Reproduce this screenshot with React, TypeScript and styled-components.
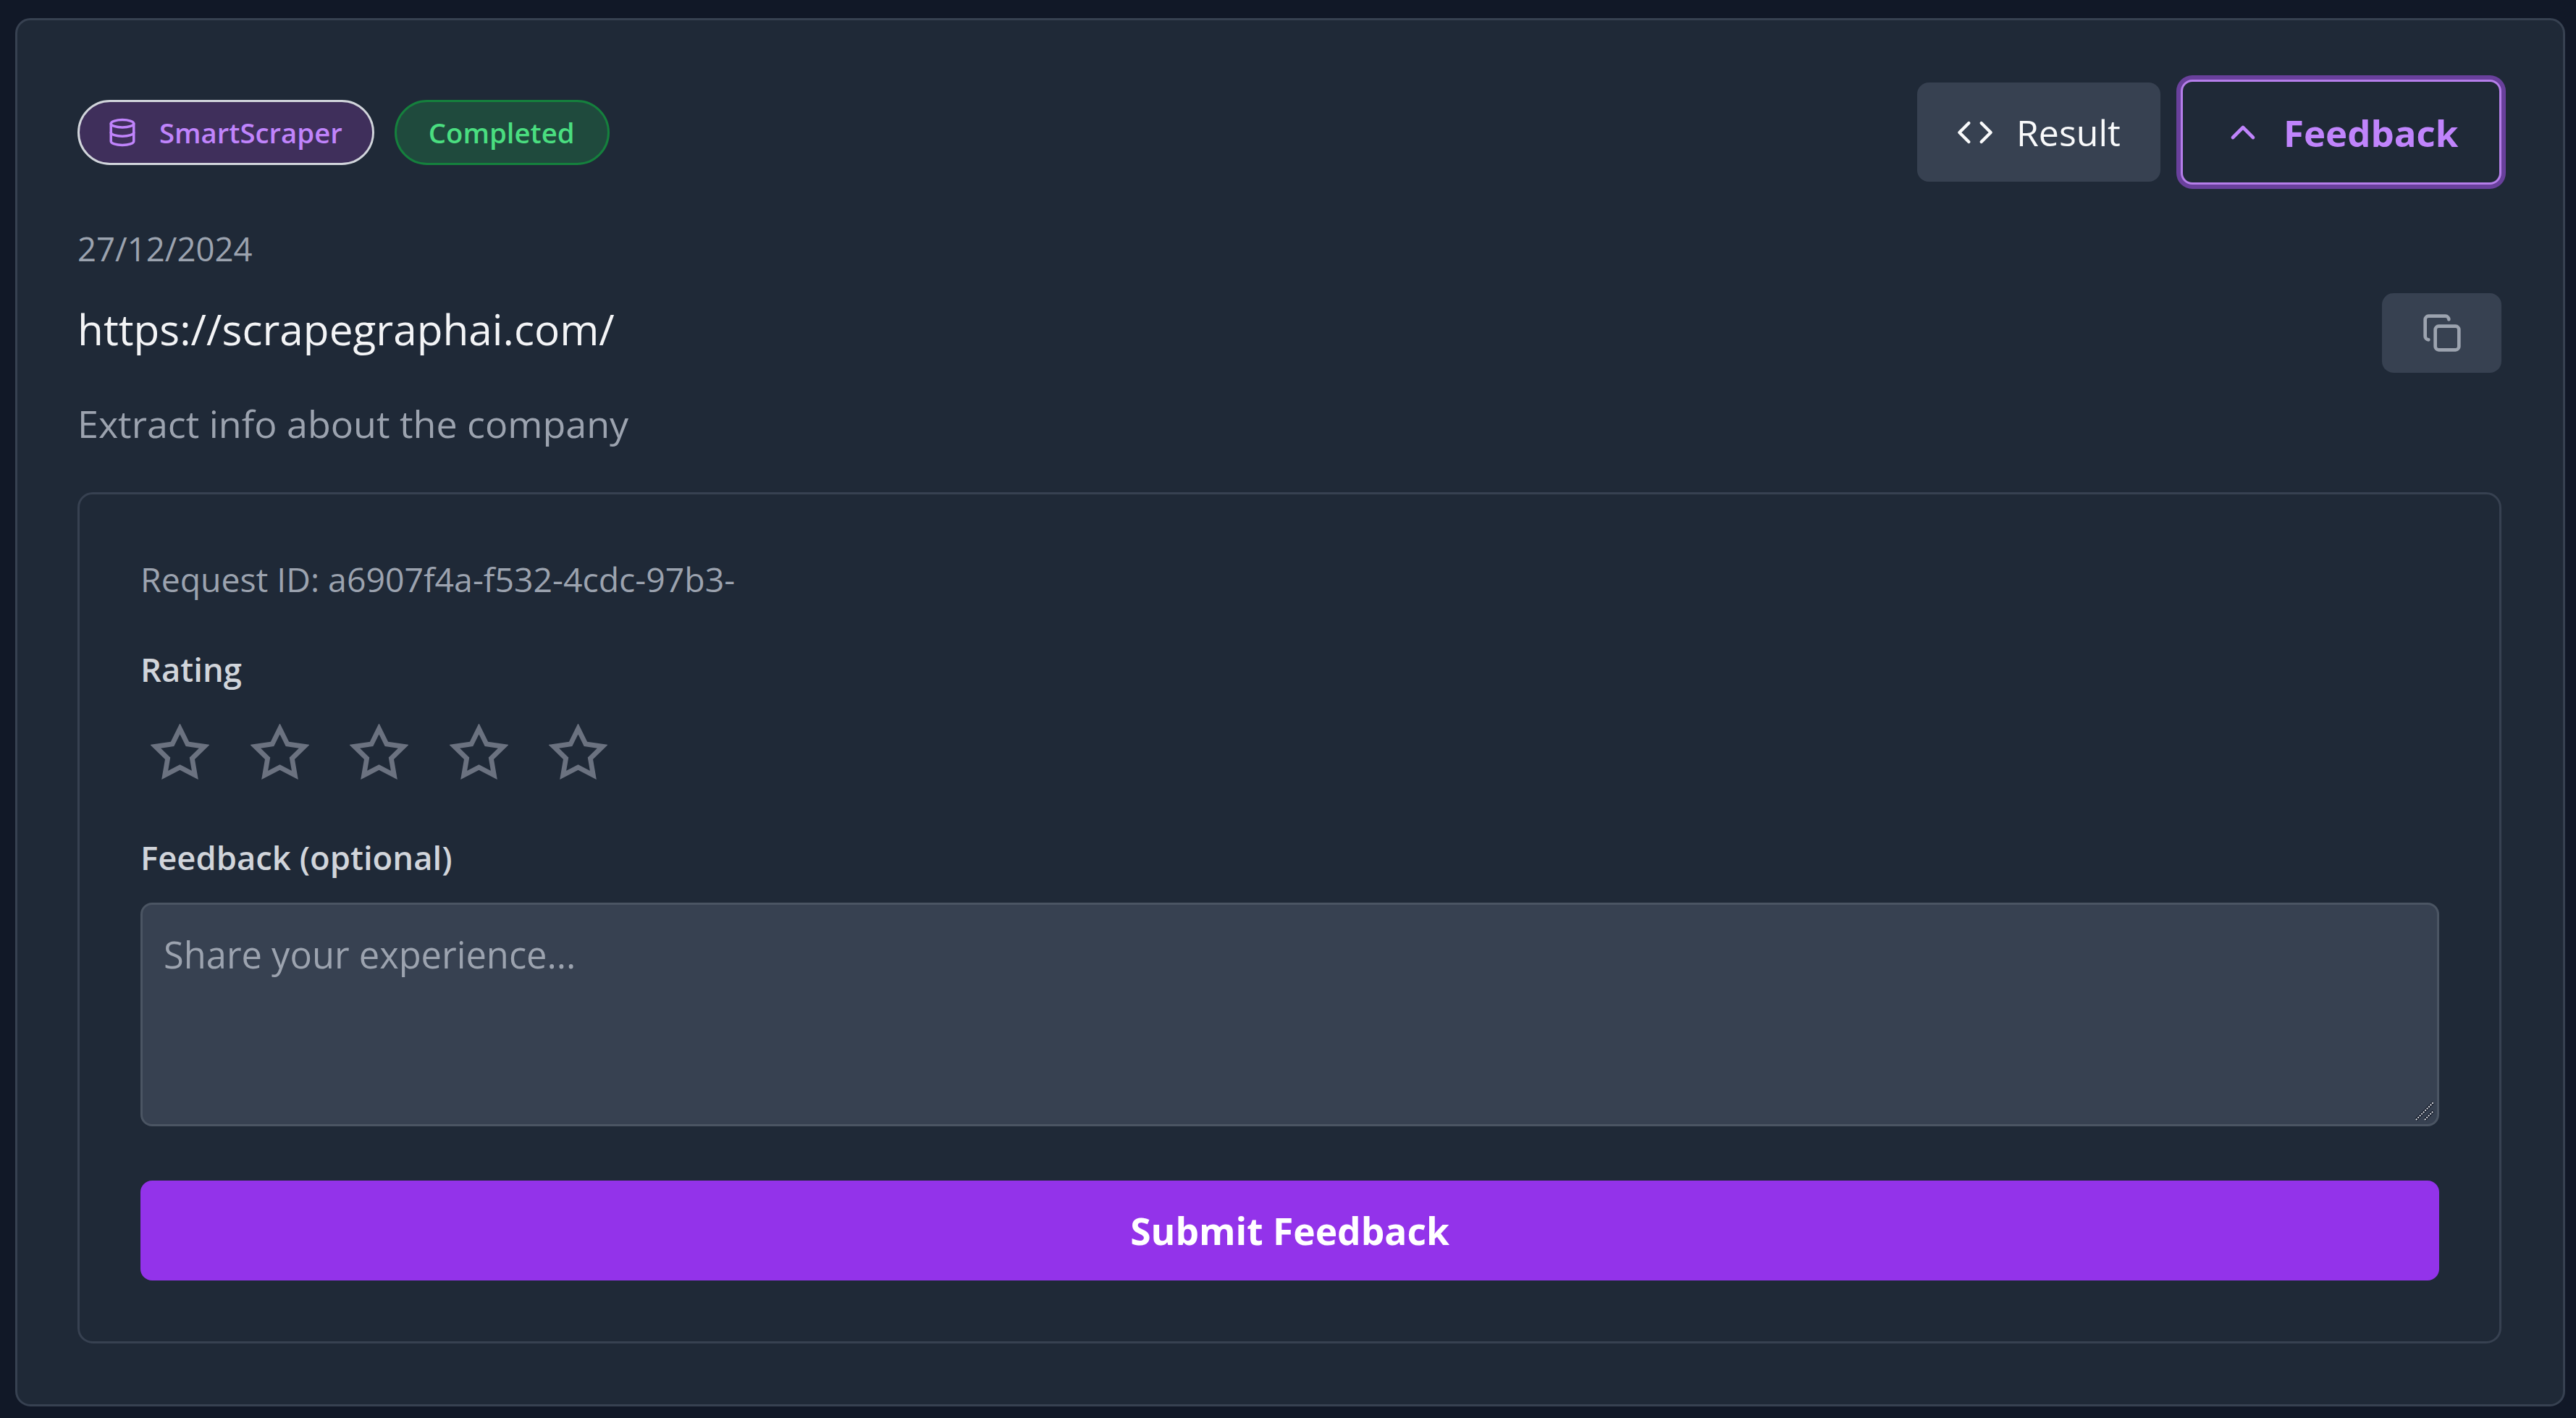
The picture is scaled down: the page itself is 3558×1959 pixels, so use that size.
import React from "react";
import styled, { createGlobalStyle } from "styled-components";
import { Database, Code, ChevronUp, Copy } from "lucide-react";

const Global = createGlobalStyle`
  html, body { margin: 0; padding: 0; background: #111827; }
  * { box-sizing: border-box; }
  body { font-family: "Open Sans", "Noto Sans", "Liberation Sans", sans-serif; }
`;

const Page = styled.div`
  width: 3558px;
  height: 1959px;
  padding: 25px 15px 16px 21px;
  background: #111827;
  overflow: hidden;
`;

const Card = styled.section`
  height: 100%;
  padding: 86px 85px 84px 83px;
  background: #1f2937;
  border: 3px solid #374151;
  border-radius: 21px;
`;

const Header = styled.header`
  display: flex;
  align-items: center;
  justify-content: space-between;
  height: 137px;
`;

const Group = styled.div<{ $gap: number }>`
  display: flex;
  align-items: center;
  gap: ${(p) => p.$gap}px;
`;

const Pill = styled.span<{ $tone: "purple" | "green" }>`
  display: inline-flex;
  align-items: center;
  gap: 30px;
  height: 90px;
  padding: ${(p) => (p.$tone === "purple" ? "0 41px 0 38px" : "0 45px 0 44px")};
  border-radius: 45px;
  font-size: 38.3px;
  font-weight: 600;
  white-space: nowrap;
  border: 3px solid ${(p) => (p.$tone === "purple" ? "#d1d5db" : "#15803d")};
  background: ${(p) => (p.$tone === "purple" ? "#3f2f5b" : "#1f4a3d")};
  color: ${(p) => (p.$tone === "purple" ? "#c084fc" : "#4ade80")};
`;

const Result = styled.button`
  display: inline-flex;
  align-items: center;
  gap: 31px;
  height: 137px;
  width: 336px;
  padding: 0 0 0 54px;
  border: 0;
  border-radius: 16px;
  background: #374151;
  color: #f9fafb;
  font: 400 50px "Open Sans", sans-serif;
`;

const FeedbackToggle = styled.button`
  display: inline-flex;
  align-items: center;
  gap: 28px;
  height: 145px;
  width: 443px;
  padding: 0 0 0 55px;
  border: 3px solid #b57eea;
  border-radius: 16px;
  background: #1f2937;
  color: #c084fc;
  box-shadow: 0 0 0 6px #69409c;
  font: 700 51px "Open Sans", sans-serif;
`;

const DateText = styled.div`
  margin-top: 70px;
  height: 44px;
  line-height: 44px;
  font-size: 45.5px;
  color: #9ca3af;
`;

const UrlRow = styled.div`
  display: flex;
  align-items: center;
  justify-content: space-between;
  height: 110px;
  margin-top: 40px;
`;

const Url = styled.div`
  margin-bottom: 12px;
  font-size: 58.5px;
  color: #f3f4f6;
`;

const CopyButton = styled.button`
  display: flex;
  align-items: center;
  justify-content: center;
  width: 165px;
  height: 110px;
  padding: 0;
  border: 0;
  border-radius: 16px;
  background: #374151;
  color: #9ca3af;
`;

const Prompt = styled.div`
  margin-top: 42px;
  height: 56px;
  line-height: 56px;
  font-size: 52px;
  color: #9ca3af;
`;

const Panel = styled.div`
  margin-top: 67px;
  height: 1176px;
  padding: 84px 83px 84px 84px;
  border: 3px solid #374151;
  border-radius: 21px;
`;

const RequestId = styled.div`
  margin-top: 3px;
  height: 60px;
  line-height: 60px;
  font-size: 46.4px;
  color: #9ca3af;
`;

const Label = styled.label<{ $top: number }>`
  display: block;
  margin-top: ${(p) => p.$top}px;
  height: 50px;
  line-height: 50px;
  font-size: 45.4px;
  font-weight: 600;
  color: #d1d5db;
`;

const Stars = styled.div`
  display: flex;
  gap: 56.5px;
  margin: 51px 0 2px 14px;
  color: #6b7280;
`;

const AreaWrap = styled.div`
  position: relative;
  margin-top: 38px;
  height: 309px;
`;

const Area = styled.textarea`
  display: block;
  width: 100%;
  height: 100%;
  padding: 31px 29px;
  resize: none;
  outline: none;
  background: #374151;
  border: 3px solid #4b5563;
  border-radius: 16px;
  color: #f3f4f6;
  font: 400 50.6px/1.5 "Open Sans", sans-serif;
  &::placeholder { color: #9ca3af; opacity: 1; }
`;

const Grip = styled.svg`
  position: absolute;
  right: 5px;
  bottom: 6px;
`;

const Submit = styled.button`
  display: block;
  width: 100%;
  height: 138px;
  margin-top: 75px;
  border: 0;
  border-radius: 16px;
  background: #9333ea;
  color: #fff;
  font: 700 51.5px "Open Sans", sans-serif;
`;

const StarIcon = () => (
  <svg width="81" height="81" viewBox="0 0 24 24" fill="none" stroke="currentColor" strokeWidth="2" strokeLinejoin="miter" strokeMiterlimit="3">
    <polygon points="12 2 15.09 8.26 22 9.27 17 14.14 18.18 21.02 12 17.77 5.82 21.02 7 14.14 2 9.27 8.91 8.26" />
  </svg>
);

export default function App() {
  return (
    <Page>
      <Global />
      <Card>
        <Header>
          <Group $gap={28}>
            <Pill $tone="purple">
              <Database size={42} strokeWidth={2} />
              SmartScraper
            </Pill>
            <Pill $tone="green">Completed</Pill>
          </Group>
          <Group $gap={28}>
            <Result>
              <Code size={52} strokeWidth={2} />
              Result
            </Result>
            <FeedbackToggle>
              <ChevronUp size={56} strokeWidth={2} />
              Feedback
            </FeedbackToggle>
          </Group>
        </Header>
        <DateText>27/12/2024</DateText>
        <UrlRow>
          <Url>https://scrapegraphai.com/</Url>
          <CopyButton aria-label="Copy">
            <Copy size={56} strokeWidth={2} />
          </CopyButton>
        </UrlRow>
        <Prompt>Extract info about the company</Prompt>
        <Panel>
          <RequestId>Request ID: a6907f4a-f532-4cdc-97b3-</RequestId>
          <Label $top={69}>Rating</Label>
          <Stars>
            {[0, 1, 2, 3, 4].map((i) => (
              <StarIcon key={i} />
            ))}
          </Stars>
          <Label $top={78}>Feedback (optional)</Label>
          <AreaWrap>
            <Area placeholder="Share your experience..." />
            <Grip width="30" height="30" viewBox="0 0 30 30" aria-hidden="true">
              <path d="M3 27 27 3M15 27 27 15" stroke="#111827" strokeWidth="4" />
              <path d="M3 27 27 3M15 27 27 15" stroke="#e5e7eb" strokeWidth="2" strokeDasharray="2 1.5" />
            </Grip>
          </AreaWrap>
          <Submit>Submit Feedback</Submit>
        </Panel>
      </Card>
    </Page>
  );
}
